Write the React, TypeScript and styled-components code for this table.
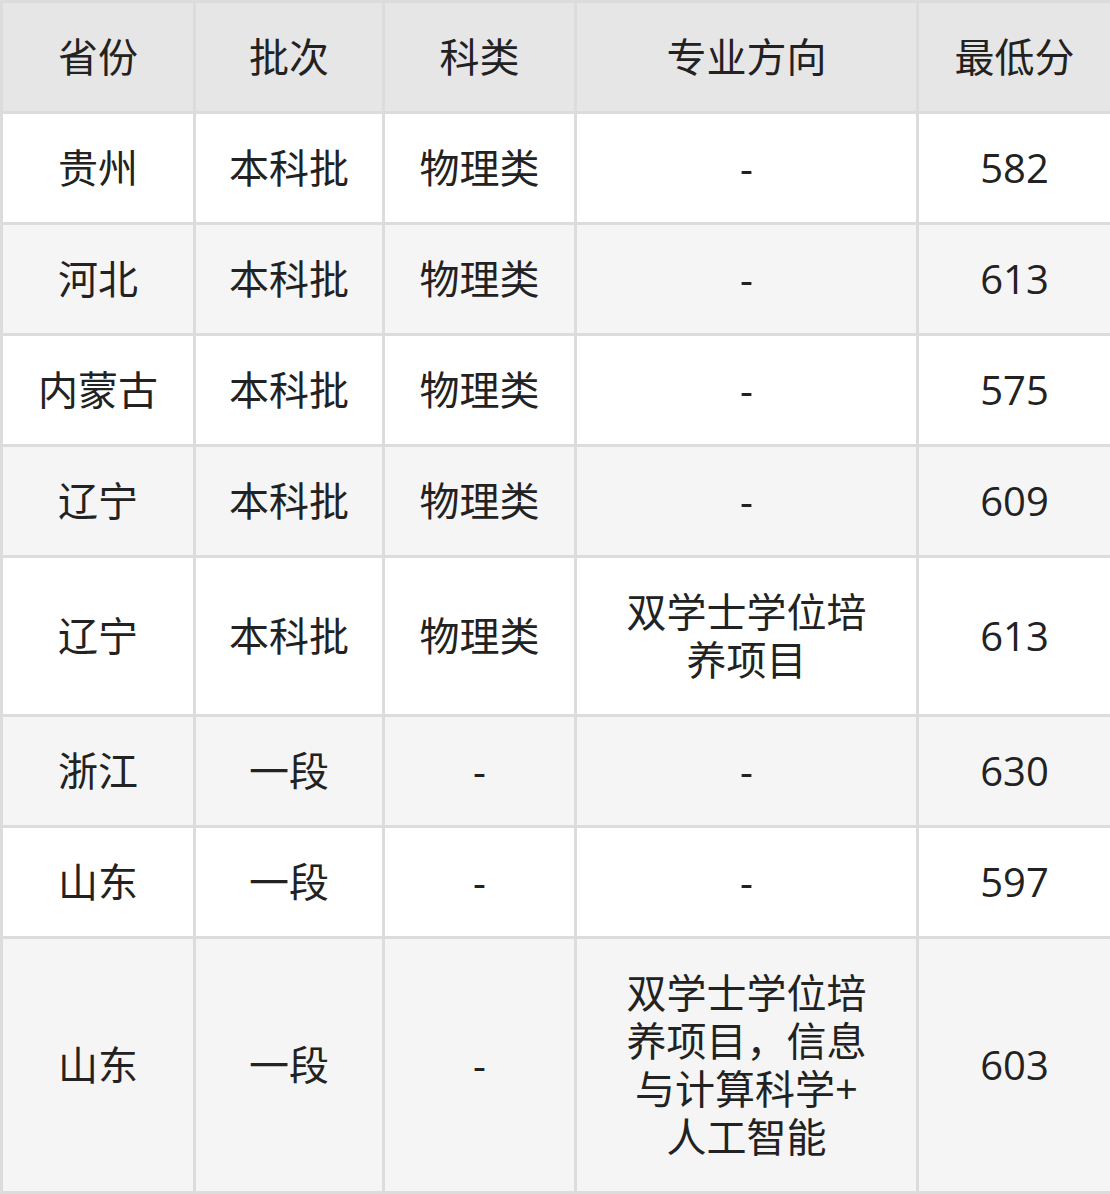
import React from 'react';
import styled, { createGlobalStyle } from 'styled-components';

const GlobalStyle = createGlobalStyle`
    body {
        margin: 0;
        background: #fff;
        font-family: "Open Sans", "Noto Sans CJK SC", sans-serif;
    }
`;

const Table = styled.table`
    width: 1110px;
    border-collapse: collapse;
    table-layout: fixed;
    border: 3px solid #dcdcdc;
    color: #222;
    font-size: 40px;
    line-height: 48px;
`;

const HeadRow = styled.tr`
    background: #e6e6e6;
`;

const BodyRow = styled.tr<{ $striped: boolean }>`
    background: ${(p) => (p.$striped ? '#f5f5f5' : '#fff')};
`;

const Th = styled.th`
    border: 3px solid #dcdcdc;
    padding: 30px 6px;
    font-weight: 400;
    text-align: center;
    vertical-align: middle;
`;

const Td = styled.td`
    border: 3px solid #dcdcdc;
    padding: 30px 6px;
    text-align: center;
    vertical-align: middle;
    white-space: pre-line;
`;

const widths = [193, 189, 192, 342, 194];
const headers = ['省份', '批次', '科类', '专业方向', '最低分'];

const rows = [
    ['贵州', '本科批', '物理类', '-', '582'],
    ['河北', '本科批', '物理类', '-', '613'],
    ['内蒙古', '本科批', '物理类', '-', '575'],
    ['辽宁', '本科批', '物理类', '-', '609'],
    ['辽宁', '本科批', '物理类', '双学士学位培\n养项目', '613'],
    ['浙江', '一段', '-', '-', '630'],
    ['山东', '一段', '-', '-', '597'],
    ['山东', '一段', '-', '双学士学位培\n养项目，信息\n与计算科学+\n人工智能', '603'],
];

const App: React.FC = () => {
    return (
        <>
            <GlobalStyle />
            <Table>
                <colgroup>
                    {widths.map((w, i) => (
                        <col key={i} style={{ width: w }} />
                    ))}
                </colgroup>
                <thead>
                    <HeadRow>
                        {headers.map((h) => (
                            <Th key={h}>{h}</Th>
                        ))}
                    </HeadRow>
                </thead>
                <tbody>
                    {rows.map((r, i) => (
                        <BodyRow key={i} $striped={i % 2 === 1}>
                            {r.map((c, j) => (
                                <Td key={j}>{c}</Td>
                            ))}
                        </BodyRow>
                    ))}
                </tbody>
            </Table>
        </>
    );
};

export default App;
